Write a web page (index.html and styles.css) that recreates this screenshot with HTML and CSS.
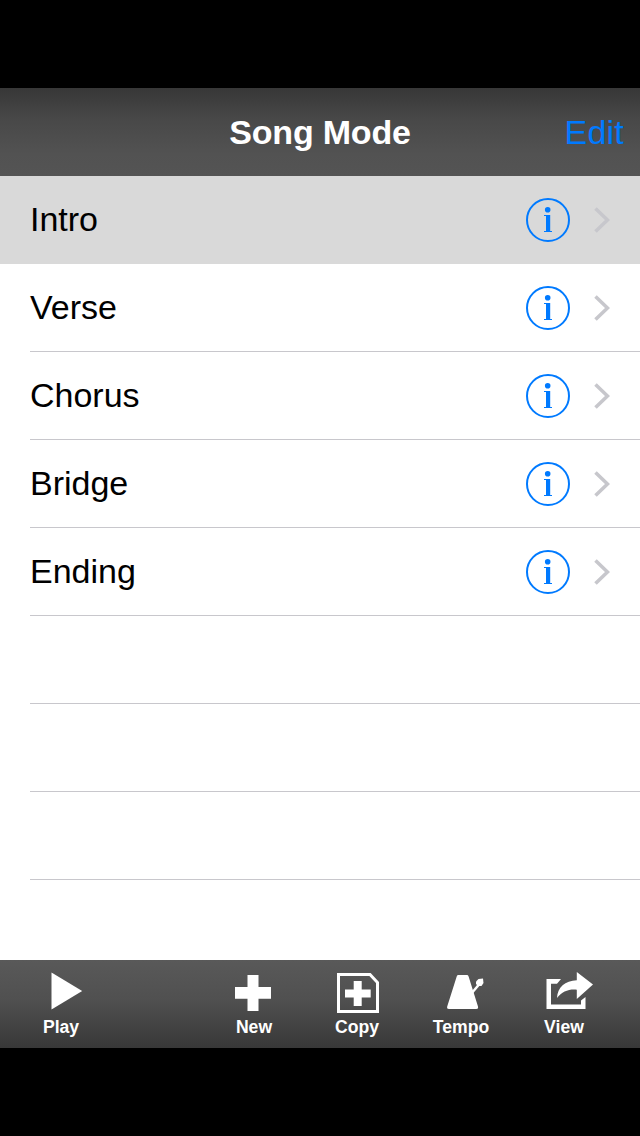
FILE: index.html
```html
<!DOCTYPE html>
<html lang="en">
  <head>
    <meta charset="UTF-8" />
    <meta name="viewport" content="width=device-width, initial-scale=1.0" />
    <title>Song Mode</title>
    <link rel="stylesheet" href="styles.css">
  </head>
  <body>
    <!-- shared icons for the list rows -->
    <svg class="symbols">
      <symbol id="info" viewBox="0 0 44 44">
        <circle cx="22" cy="22" r="21" fill="none" stroke="currentColor" stroke-width="2" />
        <circle cx="21.7" cy="11.8" r="2.8" fill="currentColor" />
        <path d="M18 17h6.2v16H26v1h-8v-1h2V18h-2z" fill="currentColor" />
      </symbol>
      <symbol id="chevron" viewBox="0 0 16 26">
        <path d="M1.5 1.5 13.5 13 1.5 24.5" fill="none" stroke="currentColor" stroke-width="3.6" />
      </symbol>
    </svg>

    <div class="app">
      <header class="navbar">
        <h1>Song Mode</h1>
        <a class="edit" href="#">Edit</a>
      </header>

      <ul class="list">
        <li class="row selected">
          <span class="name">Intro</span>
          <svg class="info"><use href="#info" /></svg>
          <svg class="chevron"><use href="#chevron" /></svg>
        </li>
        <li class="row">
          <span class="name">Verse</span>
          <svg class="info"><use href="#info" /></svg>
          <svg class="chevron"><use href="#chevron" /></svg>
        </li>
        <li class="row">
          <span class="name">Chorus</span>
          <svg class="info"><use href="#info" /></svg>
          <svg class="chevron"><use href="#chevron" /></svg>
        </li>
        <li class="row">
          <span class="name">Bridge</span>
          <svg class="info"><use href="#info" /></svg>
          <svg class="chevron"><use href="#chevron" /></svg>
        </li>
        <li class="row">
          <span class="name">Ending</span>
          <svg class="info"><use href="#info" /></svg>
          <svg class="chevron"><use href="#chevron" /></svg>
        </li>
        <li class="row"></li>
        <li class="row"></li>
        <li class="row"></li>
      </ul>

      <footer class="toolbar">
        <div class="tool play">
          <svg viewBox="0 0 60 44"><path d="M20.5 2.5 51.2 21 20.5 39.5z" /></svg>
          <span>Play</span>
        </div>
        <div class="tool">
          <svg viewBox="0 0 60 44"><path d="M23.5 5h11v12H47v11.7H34.5V41h-11V28.7H11V17h12.5z" /></svg>
          <span>New</span>
        </div>
        <div class="tool">
          <svg viewBox="0 0 60 44">
            <path class="line" d="M11.5 4.5H43l7.500 8v29h-39z" />
            <path d="M26.700 11h8v8.500h9v8h-9V36h-8v-8.500H18v-8h8.700z" />
          </svg>
          <span>Copy</span>
        </div>
        <div class="tool tempo">
          <svg viewBox="0 0 60 44">
            <path d="M27.500 5h8.300q1.400 0 1.800 1.400L47 36.500q.6 2.500-1.800 2.500H18q-2.400 0-1.800-2.500L25.700 6.400Q26.100 5 27.500 5z" />
            <path class="line rod" d="M40 24 48 14.500" />
            <path d="M47.500 9l4.500-.5.5 4.500-2 3h-3.500L45 14v-2.500z" />
          </svg>
          <span>Tempo</span>
        </div>
        <div class="tool">
          <svg viewBox="0 0 60 44">
            <path d="M12.500 9H27l-4 4.700h-6V34.500h30v-4l4.500-3.500v12h-39z" />
            <path d="M42.800 2 59 14.500 42.800 29v-9.300C34.500 19 28 21.500 23 28 23.500 17.500 31 10.500 42.800 10.300z" />
          </svg>
          <span>View</span>
        </div>
      </footer>
    </div>
  </body>
</html>
```
FILE: styles.css
```css
* {
  box-sizing: border-box;
}

body {
  margin: 0;
  background: #000;
  font-family: "Liberation Sans", Arial, sans-serif;
}

.symbols {
  display: none;
}

.app {
  width: 640px;
  height: 1136px;
  padding: 88px 0;
  display: flex;
  flex-direction: column;
}

.navbar {
  display: grid;
  grid-template-columns: 1fr auto 1fr;
  align-items: center;
  height: 88px;
  padding: 0 16px;
  background: linear-gradient(#373737, #484848 35%, #525252 75%, #545454);
}

.navbar h1 {
  grid-column: 2;
  margin: 0;
  color: #fff;
  font-size: 34px;
  line-height: 40px;
  letter-spacing: -0.2px;
}

.edit {
  justify-self: end;
  color: #007aff;
  font-size: 34px;
  line-height: 40px;
  letter-spacing: 0.2px;
  text-decoration: none;
}

.list {
  flex: 1;
  margin: 0;
  padding: 0;
  background: #fff;
  list-style: none;
}

.row {
  display: flex;
  align-items: center;
  height: 88px;
  margin-left: 30px;
  padding-right: 30px;
  border-bottom: 1px solid #c8c7cc;
}

.row.selected {
  margin-left: 0;
  padding-left: 30px;
  background: #d9d9d9;
  border-color: #d9d9d9;
}

.name {
  flex: 1;
  padding-bottom: 2px;
  font-size: 34px;
  line-height: 40px;
}

.info {
  width: 44px;
  height: 44px;
  margin-right: 24px;
  color: #007aff;
}

.chevron {
  width: 16px;
  height: 26px;
  color: #c7c7cc;
}

.toolbar {
  display: flex;
  gap: 43px;
  height: 88px;
  padding: 10px 46px 0 31px;
  background: linear-gradient(#595959, #505050 45%, #383838);
}

.tool {
  display: flex;
  flex-direction: column;
  align-items: center;
  width: 60px;
  color: #fff;
  font-size: 17.6px;
  font-weight: bold;
  line-height: 20px;
}

.tool svg {
  width: 60px;
  height: 44px;
  margin-bottom: 3px;
  fill: #fff;
}

.tool .line {
  fill: none;
  stroke: #fff;
  stroke-width: 3;
}

.tool .rod {
  stroke-width: 2.5;
}

.play {
  margin-right: auto;
}

.tempo {
  margin-left: 1px;
}
```
